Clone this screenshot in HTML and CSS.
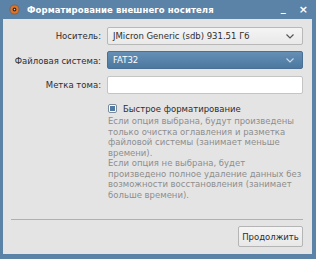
FILE: index.html
```html
<!DOCTYPE html>
<html>
<head>
<meta charset="utf-8">
<link rel="stylesheet" href="styles.css">
</head>
<body>
<div class="window">
  <div class="titlebar">
    <svg class="appicon" width="11" height="11" viewBox="0 0 12 12">
      <circle cx="6" cy="6" r="5.6" fill="#7a6a5e"/>
      <circle cx="6" cy="6" r="4.3" fill="#e0742a"/>
      <circle cx="6" cy="6" r="2.1" fill="#3a2a22"/>
      <circle cx="6" cy="6" r="0.8" fill="#cfcfcf"/>
    </svg>
    <span class="title">Форматирование внешнего носителя</span>
    <span class="ctl min">_</span>
    <span class="ctl close">×</span>
  </div>
  <div class="content">
    <div class="form">
      <label class="lbl">Носитель:</label>
      <div class="combo">
        <span>JMicron Generic (sdb) 931.51 Гб</span>
        <svg class="arrow" width="8" height="5" viewBox="0 0 8 5"><path d="M0.5 0.5 L4 4 L7.5 0.5" fill="none" stroke="#555" stroke-width="1.2"/></svg>
      </div>
      <label class="lbl">Файловая система:</label>
      <div class="combo selected">
        <span>FAT32</span>
        <svg class="arrow" width="8" height="5" viewBox="0 0 8 5"><path d="M0.5 0.5 L4 4 L7.5 0.5" fill="none" stroke="#c8d8e8" stroke-width="1.2"/></svg>
      </div>
      <label class="lbl">Метка тома:</label>
      <div class="field"></div>
    </div>
    <div class="opts">
      <div class="check-row">
        <span class="checkbox"><span class="mark"></span></span>
        <span>Быстрое форматирование</span>
      </div>
      <p class="desc">Если опция выбрана, будут произведены<br>только очистка оглавления и разметка<br>файловой системы (занимает меньше<br>времени).<br>Если опция не выбрана, будет<br>произведено полное удаление данных без<br>возможности восстановления (занимает<br>больше времени).</p>
    </div>
    <div class="spacer"></div>
    <div class="sep"></div>
    <div class="buttons">
      <button class="btn">Продолжить</button>
    </div>
  </div>
</div>
</body>
</html>
```
FILE: styles.css
```css
* { box-sizing: border-box; }
html, body { margin: 0; padding: 0; }
body {
  width: 316px;
  height: 259px;
  font-family: "DejaVu Sans", sans-serif;
  font-size: 8.5px;
  color: #2e2e2e;
  overflow: hidden;
}
.window {
  width: 316px;
  height: 259px;
  background: #5b83a7;
  padding: 0 4px 5px 3px;
  display: flex;
  flex-direction: column;
}
.titlebar {
  height: 19px;
  display: flex;
  align-items: center;
  color: #fff;
  padding-left: 6px;
  padding-right: 4px;
}
.appicon { flex: none; }
.title {
  font-weight: bold;
  font-size: 8.5px;
  margin-left: 7px;
  flex: 1;
  letter-spacing: 0.1px;
}
.ctl { font-weight: bold; font-size: 10px; }
.min { margin-right: 13px; position: relative; top: -2px; }
.close { font-size: 11px; }
.content {
  flex: 1;
  background: #e4e4e4;
  padding: 8px 9px 7px 8px;
  display: flex;
  flex-direction: column;
}
.form {
  display: grid;
  grid-template-columns: 90px 1fr;
  column-gap: 6px;
  row-gap: 7px;
  align-items: center;
}
.lbl { text-align: right; white-space: nowrap; }
.combo {
  height: 18px;
  border: 1px solid #b8b8b8;
  border-radius: 2px;
  background: linear-gradient(#f4f4f4, #e9e9e9);
  display: flex;
  align-items: center;
  justify-content: space-between;
  padding: 0 8px 0 5px;
}
.combo.selected {
  background: linear-gradient(#658fb5, #4c779f);
  border-color: #4a7096;
  color: #fff;
  margin-top: -1px;
}
.field {
  height: 18px;
  background: #fff;
  border: 1px solid #c4c4c4;
  border-radius: 2px;
}
.opts {
  margin-left: 97px;
  margin-top: 10px;
}
.check-row {
  display: flex;
  align-items: center;
  gap: 6px;
  height: 9px;
}
.checkbox {
  width: 9px;
  height: 9px;
  border: 1px solid #7a8a9a;
  border-radius: 2px;
  background: #fff;
  display: flex;
  align-items: center;
  justify-content: center;
}
.mark {
  width: 5px;
  height: 5px;
  background: #4f7aa2;
}
.desc {
  margin: 3px 0 0 0;
  color: #8e8e8e;
  line-height: 10.5px;
  white-space: nowrap;
}
.spacer { flex: 1; }
.sep {
  height: 1px;
  background: #b0b0b0;
  margin-bottom: 6px;
}
.buttons {
  display: flex;
  justify-content: flex-end;
}
.btn {
  font-family: inherit;
  font-size: 8.5px;
  color: #2e2e2e;
  height: 21px;
  width: 65px;
  padding: 0;
  border: 1px solid #b5b5b5;
  border-radius: 2px;
  background: linear-gradient(#f4f4f4, #e8e8e8);
}
```
